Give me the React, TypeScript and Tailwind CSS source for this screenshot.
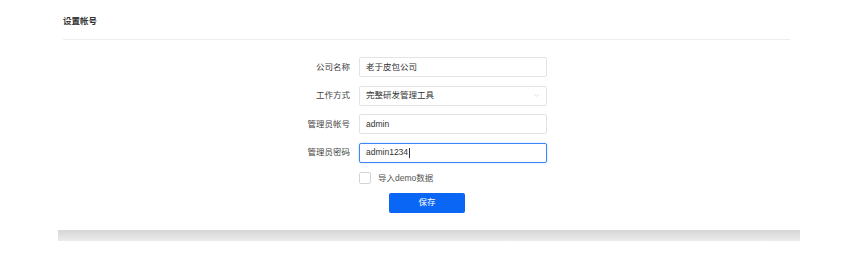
import { ChevronDown } from "lucide-react";

const font = {
  fontFamily: '"Liberation Sans", "Noto Sans CJK SC", sans-serif',
};

// 表单行
const rows = [
  { label: "公司名称", value: "老于皮包公司", kind: "text" },
  { label: "工作方式", value: "完整研发管理工具", kind: "select" },
  { label: "管理员帐号", value: "admin", kind: "text" },
  { label: "管理员密码", value: "admin1234", kind: "focus" },
];

export default function App() {
  return (
    <div className="w-[865px] h-[257px] bg-white overflow-hidden" style={font}>
      <div className="ml-[58px] w-[742px]">
        {/* Header */}
        <div className="pl-[5px] pr-[10px]">
          <div className="pt-[15px] h-[39px] text-[8.5px] leading-[12px] font-semibold text-[#333]">
            设置帐号
          </div>
          <div className="h-px bg-[#ededed]" />
        </div>

        {/* Form */}
        <div className="mt-[17px] ml-[200px] grid grid-cols-[92px_188px] gap-x-[9px] gap-y-[8.5px] items-center">
          {rows.map((r) => (
            <div key={r.label} className="contents">
              <div className="text-right text-[8.5px] text-[#444]">{r.label}</div>
              <div
                className={
                  r.kind === "focus"
                    ? "h-[20px] flex items-center px-[6px] rounded-[2px] border border-[#3d86f5] shadow-[0_0_2px_rgba(61,134,245,0.4)] text-[8.5px] text-[#333]"
                    : "h-[20px] flex items-center px-[6px] rounded-[2px] border border-[#e3e3e3] text-[8.5px] text-[#333]"
                }
              >
                <span>{r.value}</span>
                {r.kind === "focus" && <span className="ml-[1px] w-px h-[10px] bg-[#333]" />}
                {r.kind === "select" && (
                  <ChevronDown className="ml-auto w-[7px] h-[7px] text-[#c8c8c8]" strokeWidth={2} />
                )}
              </div>
            </div>
          ))}
          <div />
          <div className="mt-[1px] h-[12px] flex items-center gap-[7px] leading-none">
            <div className="w-[12px] h-[12px] rounded-[2px] border border-[#d4d4d4] bg-white" />
            <span className="text-[8.5px] text-[#555]">导入demo数据</span>
          </div>
          <div />
          <div className="pl-[30px] h-[20px]">
            <button className="block w-[76px] h-[20px] rounded-[2px] bg-[#0a66f5] text-white text-[8.5px] leading-none">
              保存
            </button>
          </div>
        </div>

        {/* Bottom bar */}
        <div className="mt-[17px] h-[11px] bg-gradient-to-b from-[#d6d6d6] to-[#ececec]" />
      </div>
    </div>
  );
}
